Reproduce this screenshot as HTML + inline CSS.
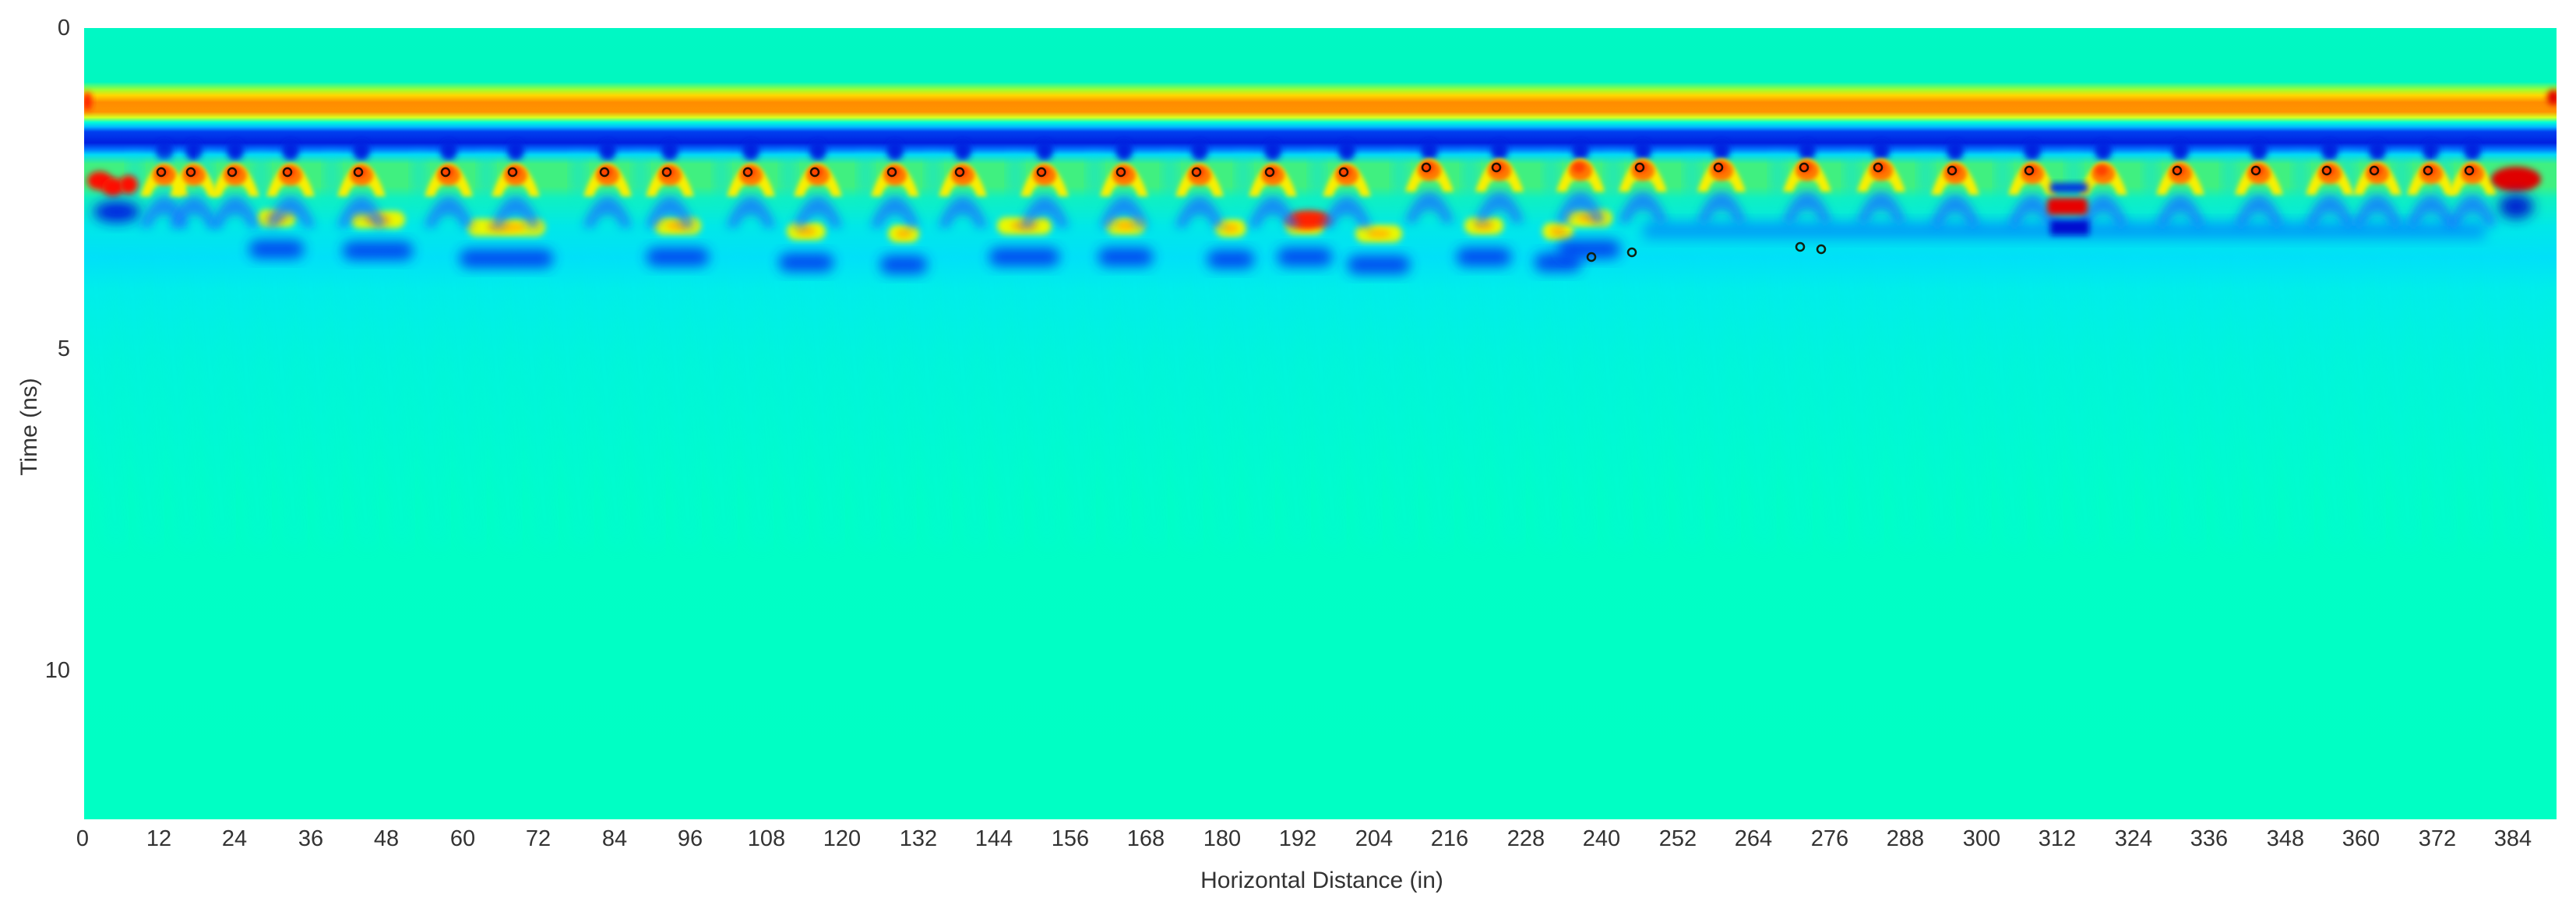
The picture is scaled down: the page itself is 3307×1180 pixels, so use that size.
<!DOCTYPE html>
<html><head><meta charset="utf-8"><style>
html,body{margin:0;padding:0;background:#fff;width:3307px;height:1180px;overflow:hidden}
svg{display:block}
text{font-family:"Liberation Sans",sans-serif;fill:#333}
</style></head><body>
<svg id="s" width="3307" height="1180" viewBox="0 0 3307 1180" xmlns="http://www.w3.org/2000/svg">
<defs>
<linearGradient id="bg" gradientUnits="userSpaceOnUse" x1="0" y1="36" x2="0" y2="1052">
<stop offset="0" stop-color="#00f8c4"/>
<stop offset="0.068" stop-color="#00f8c0"/>
<stop offset="0.078" stop-color="#a0ff30"/>
<stop offset="0.085" stop-color="#ffd800"/>
<stop offset="0.094" stop-color="#ff8c00"/>
<stop offset="0.106" stop-color="#ff9400"/>
<stop offset="0.113" stop-color="#d8ff20"/>
<stop offset="0.119" stop-color="#00ffd8"/>
<stop offset="0.125" stop-color="#00b8ff"/>
<stop offset="0.131" stop-color="#0040f0"/>
<stop offset="0.145" stop-color="#0020e0"/>
<stop offset="0.153" stop-color="#0070ff"/>
<stop offset="0.160" stop-color="#00d8f8"/>
<stop offset="0.172" stop-color="#40f080"/>
<stop offset="0.20" stop-color="#40f080"/>
<stop offset="0.215" stop-color="#10f0c0"/>
<stop offset="0.25" stop-color="#00e8e8"/>
<stop offset="0.29" stop-color="#00e0f8"/>
<stop offset="0.33" stop-color="#00eee8"/>
<stop offset="0.42" stop-color="#00f6d8"/>
<stop offset="0.6" stop-color="#00ffc6"/>
<stop offset="1" stop-color="#00ffc4"/>
</linearGradient>
<filter id="b3" x="-50%" y="-50%" width="200%" height="200%"><feGaussianBlur stdDeviation="3"/></filter>
<filter id="b4" x="-50%" y="-50%" width="200%" height="200%"><feGaussianBlur stdDeviation="4"/></filter>
<filter id="b6" x="-50%" y="-50%" width="200%" height="200%"><feGaussianBlur stdDeviation="6"/></filter>
<filter id="b8" x="-50%" y="-50%" width="200%" height="200%"><feGaussianBlur stdDeviation="8"/></filter>
<filter id="b14" x="-50%" y="-50%" width="200%" height="200%"><feGaussianBlur stdDeviation="14"/></filter>
<clipPath id="cp"><rect x="108" y="36" width="3174" height="1016"/></clipPath>
</defs>
<rect x="108" y="36" width="3174" height="1016" fill="url(#bg)"/>
<g id="g" clip-path="url(#cp)"></g>

<g font-size="29" text-anchor="middle">
<text x="106" y="1086">0</text><text x="204" y="1086">12</text><text x="301" y="1086">24</text><text x="399" y="1086">36</text><text x="496" y="1086">48</text><text x="594" y="1086">60</text><text x="691" y="1086">72</text><text x="789" y="1086">84</text><text x="886" y="1086">96</text><text x="984" y="1086">108</text><text x="1081" y="1086">120</text><text x="1179" y="1086">132</text><text x="1276" y="1086">144</text><text x="1374" y="1086">156</text><text x="1471" y="1086">168</text><text x="1569" y="1086">180</text><text x="1666" y="1086">192</text><text x="1764" y="1086">204</text><text x="1861" y="1086">216</text><text x="1959" y="1086">228</text><text x="2056" y="1086">240</text><text x="2154" y="1086">252</text><text x="2251" y="1086">264</text><text x="2349" y="1086">276</text><text x="2446" y="1086">288</text><text x="2544" y="1086">300</text><text x="2641" y="1086">312</text><text x="2739" y="1086">324</text><text x="2836" y="1086">336</text><text x="2934" y="1086">348</text><text x="3031" y="1086">360</text><text x="3129" y="1086">372</text><text x="3226" y="1086">384</text>
</g>
<g font-size="29" text-anchor="end">
<text x="90" y="45">0</text><text x="90" y="457">5</text><text x="90" y="870">10</text>
</g>
<text x="1697" y="1140" font-size="30" text-anchor="middle">Horizontal Distance (in)</text>
<text transform="translate(47,548) rotate(-90)" font-size="30" text-anchor="middle">Time (ns)</text>
</svg>
<script>
(function(){
var g=document.getElementById('g'),NS='http://www.w3.org/2000/svg';
function el(t,a){var e=document.createElementNS(NS,t);for(var k in a)e.setAttribute(k,a[k]);g.appendChild(e);return e;}
function cap(p,y,w,h,t){
 return 'M'+(p-w)+' '+(y+h)+' C'+(p-w*0.7)+' '+(y+h*0.35)+' '+(p-w*0.35)+' '+y+' '+p+' '+y+' C'+(p+w*0.35)+' '+y+' '+(p+w*0.7)+' '+(y+h*0.35)+' '+(p+w)+' '+(y+h)+
 ' L'+(p+w-t)+' '+(y+h)+' C'+(p+w*0.45)+' '+(y+h*0.7)+' '+(p+w*0.25)+' '+(y+h*0.6)+' '+p+' '+(y+h*0.6)+' C'+(p-w*0.25)+' '+(y+h*0.6)+' '+(p-w*0.45)+' '+(y+h*0.7)+' '+(p-w+t)+' '+(y+h)+'Z';}
for(var x=120;x<3282;x+=46){el('path',{d:'M'+x+' 330 L'+(x+30)+' 700',stroke:(x%92?'#00e8ff':'#30f0a0'),'stroke-width':14,opacity:0.3,filter:'url(#b14)',fill:'none'});}
var peaks=[211,249,302,373,464,576,662,780,860,964,1050,1149,1236,1341,1443,1540,1634,1729,1835,1925,2029,2109,2210,2320,2415,2510,2609,2700,2799,2900,2991,3052,3121,3174];
peaks.forEach(function(p){el('ellipse',{cx:p,cy:193,rx:11,ry:13,fill:'#0020e0',filter:'url(#b4)'});
 el('rect',{x:p-45,y:200,width:14,height:50,fill:'#00e0f0',filter:'url(#b8)',opacity:0.6});});
var bars=[[330,380,280],[450,520,282],[600,700,292],[840,900,290],[1010,1060,297],[1140,1180,300],[1280,1350,290],[1420,1470,290],[1560,1600,293],[1650,1700,290],[1740,1800,300],[1880,1930,290],[1980,2020,297],[2010,2070,280]];
bars.forEach(function(b){el('rect',{x:b[0]-10,y:b[2]+28,width:b[1]-b[0]+20,height:24,rx:11,fill:'#0030f0',filter:'url(#b8)',opacity:0.85});
el('rect',{x:b[0],y:b[2]-11,width:b[1]-b[0],height:22,rx:11,fill:'#e8f800',filter:'url(#b4)'});
el('ellipse',{cx:(b[0]+b[1])/2,cy:b[2],rx:(b[1]-b[0])/4,ry:6,fill:'#ffc000',filter:'url(#b4)'});});
el('ellipse',{cx:1680,cy:282,rx:30,ry:12,fill:'#ff2000',filter:'url(#b4)'});
el('rect',{x:2110,y:285,width:1080,height:22,fill:'#0070ff',filter:'url(#b8)',opacity:0.6});
el('ellipse',{cx:128,cy:232,rx:16,ry:12,fill:'#ff1000',filter:'url(#b4)'});
el('ellipse',{cx:145,cy:240,rx:14,ry:12,fill:'#ff1000',filter:'url(#b4)'});
el('ellipse',{cx:165,cy:237,rx:12,ry:12,fill:'#ff1000',filter:'url(#b4)'});
el('ellipse',{cx:150,cy:272,rx:30,ry:14,fill:'#0020e0',filter:'url(#b8)'});
peaks.forEach(function(p,i){var y=(p>1800&&p<2500)?204:(p>2500?208:210);
el('path',{d:cap(p,y+42,32,40,16),fill:'#1878ff',filter:'url(#b6)',opacity:0.8});
el('path',{d:cap(p,y,31,42,13),fill:'#f8f000',filter:'url(#b3)'});
el('ellipse',{cx:p,cy:y+15,rx:15,ry:13,fill:'#ff7800',filter:'url(#b3)'});
el('ellipse',{cx:p-2,cy:y+11,rx:8,ry:7,fill:'#ff4000',filter:'url(#b3)'});
if(i!=27&&i!=20)el('circle',{cx:p-4,cy:y+11,r:5,fill:'none',stroke:'#201000','stroke-width':2.5});});
el('ellipse',{cx:3230,cy:230,rx:32,ry:16,fill:'#e00000',filter:'url(#b4)'});
el('ellipse',{cx:3230,cy:265,rx:22,ry:16,fill:'#0020d0',filter:'url(#b8)'});
el('rect',{x:2628,y:254,width:52,height:22,rx:6,fill:'#e80000',filter:'url(#b4)'});
el('rect',{x:2632,y:282,width:50,height:20,fill:'#0010d0',filter:'url(#b4)'});
el('rect',{x:2632,y:235,width:48,height:12,fill:'#0030e0',filter:'url(#b4)'});
[[2043,330],[2095,324],[2311,317],[2338,320]].forEach(function(c){el('circle',{cx:c[0],cy:c[1],r:5,fill:'none',stroke:'#102010','stroke-width':2.5});});
el('ellipse',{cx:112,cy:130,rx:6,ry:12,fill:'#ff2000',filter:'url(#b4)'});
el('ellipse',{cx:3278,cy:125,rx:8,ry:10,fill:'#e00000',filter:'url(#b4)'});
})();
</script>
</body></html>
